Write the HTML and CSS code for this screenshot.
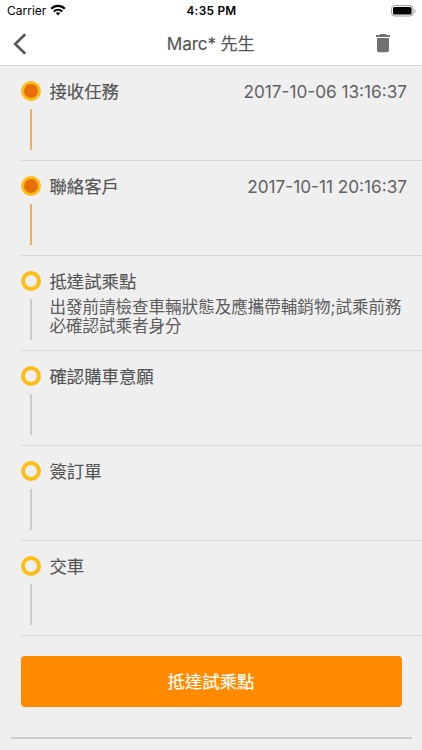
FILE: index.html
```html
<!DOCTYPE html>
<html lang="zh-Hant">
<head>
<meta charset="utf-8">
<meta name="viewport" content="width=device-width, initial-scale=1">
<title>Marc* 先生</title>
<link rel="stylesheet" href="styles.css">
</head>
<body>
<header class="header">
  <div class="status">
    <div class="carrier"><span class="carrier-name">Carrier</span>
      <svg class="wifi" width="16" height="12" viewBox="0 0 16 12" fill="none" stroke="#000" stroke-width="2.1"><path d="M1.2 4.7C5 .9 11 .9 14.8 4.7"/><path d="M3.8 7.4c2.4-2.3 6-2.3 8.4 0"/><path d="M8 11.5 5.7 9.1c1.3-1.2 3.3-1.2 4.6 0z" fill="#000" stroke="none"/></svg>
    </div>
    <div class="clock">4:35 PM</div>
    <svg class="battery" width="25" height="12" viewBox="0 0 25 12"><rect x=".6" y=".6" width="21.4" height="10.4" rx="3" fill="none" stroke="#999"/><rect x="2" y="2" width="18.6" height="7.6" rx="1.5"/><path d="M23.5 4v4c1.4-.6 1.4-3.4 0-4z" fill="#999"/></svg>
  </div>
  <nav class="navbar">
    <svg class="back" width="14" height="22" viewBox="0 0 14 22" fill="none" stroke="#595959" stroke-width="2.7"><path d="M12.2 1.2 2.2 11l10 9.8"/></svg>
    <h1 class="heading">Marc* 先生</h1>
    <svg class="trash" width="14" height="19" viewBox="0 0 14 19" fill="#707070"><path d="M4.5 0h5l1 1H14v2H0V1h3.5zM1 4h12v12.3a2 2 0 0 1-2 2H3a2 2 0 0 1-2-2z"/></svg>
  </nav>
</header>
<main>
  <ol class="steps">
    <li class="step done"><div class="rail"><i class="dot"></i><i class="line"></i></div><div class="body"><div class="row"><h2 class="title">接收任務</h2><time class="time">2017-10-06 13:16:37</time></div></div></li>
    <li class="step done"><div class="rail"><i class="dot"></i><i class="line"></i></div><div class="body"><div class="row"><h2 class="title">聯絡客戶</h2><time class="time">2017-10-11 20:16:37</time></div></div></li>
    <li class="step"><div class="rail"><i class="dot"></i><i class="line"></i></div><div class="body"><div class="row"><h2 class="title">抵達試乘點</h2></div><p class="note">出發前請檢查車輛狀態及應攜帶輔銷物;試乘前務<br>必確認試乘者身分</p></div></li>
    <li class="step"><div class="rail"><i class="dot"></i><i class="line"></i></div><div class="body"><div class="row"><h2 class="title">確認購車意願</h2></div></div></li>
    <li class="step"><div class="rail"><i class="dot"></i><i class="line"></i></div><div class="body"><div class="row"><h2 class="title">簽訂單</h2></div></div></li>
    <li class="step"><div class="rail"><i class="dot"></i><i class="line"></i></div><div class="body"><div class="row"><h2 class="title">交車</h2></div></div></li>
  </ol>
  <button class="action" type="button">抵達試乘點</button>
  <hr class="divider">
</main>
</body>
</html>
```
FILE: styles.css
```css
* { box-sizing: border-box; margin: 0; padding: 0; }
body {
  height: 750px;
  overflow: hidden;
  background: #efefef;
  color: #555;
  font-family: Inter, "Noto Sans CJK TC", sans-serif;
}
.header { height: 66px; background: #fff; border-bottom: 1px solid #d8d8d8; }
.status {
  display: grid;
  grid-template-columns: 1fr auto 1fr;
  align-items: center;
  height: 22px;
  padding: 0 6px 0 7px;
  color: #000;
  line-height: 22px;
}
.carrier { display: flex; align-items: center; gap: 4px; font-size: 12px; letter-spacing: 0; }
.wifi { margin-top: -2px; }
.clock { font-size: 11.8px; font-weight: 600; letter-spacing: .3px; }
.battery { justify-self: end; margin-top: -1px; }
.navbar {
  display: grid;
  grid-template-columns: 1fr auto 1fr;
  align-items: center;
  height: 43px;
  padding: 0 32px 0 12.5px;
}
.heading {
  margin-left: 19px;
  font-size: 17.2px;
  font-weight: 400;
  line-height: 43px;
  letter-spacing: -.15px;
  white-space: nowrap;
  -webkit-text-stroke: .15px currentColor;
}
.trash { justify-self: end; }
.steps { list-style: none; padding-left: 21px; }
.step { display: flex; height: 95px; border-bottom: 1px solid #d9dadc; }
.rail { display: flex; flex-direction: column; align-items: center; width: 20px; margin-right: 8.4px; padding-top: 15px; flex: none; }
.dot { width: 20px; height: 20px; border: 4px solid #fdbd17; border-radius: 50%; flex: none; }
.line { width: 2px; height: 41px; margin-top: 8px; background: #cbcbcb; }
.done .dot { border-width: 3px; background: #e86e0b; }
.done .line { background: #f5ab60; }
.body { flex: 1; padding: 13px 15px 0 0; }
.row { display: flex; justify-content: space-between; height: 26px; line-height: 26px; }
.title { font-size: 17.4px; font-weight: 400; -webkit-text-stroke: .15px currentColor; }
.time { font-size: 17.2px; color: #626262; white-space: nowrap; letter-spacing: 0; }
.note { margin-top: 3px; font-size: 16.55px; line-height: 19.4px; white-space: nowrap; color: #5c5c5c; }
.action {
  display: block;
  width: 381px;
  height: 51px;
  margin: 20px 0 0 20.5px;
  padding-bottom: 2px;
  border: 0;
  border-radius: 4px;
  background: #ff8a00;
  color: #fff;
  font: 400 17.4px/49px "Noto Sans CJK TC", sans-serif;
  -webkit-text-stroke: .2px currentColor;
}
.divider { height: 2px; margin: 30px 10.5px 0; border: 0; background: #cbcbcb; }
```
